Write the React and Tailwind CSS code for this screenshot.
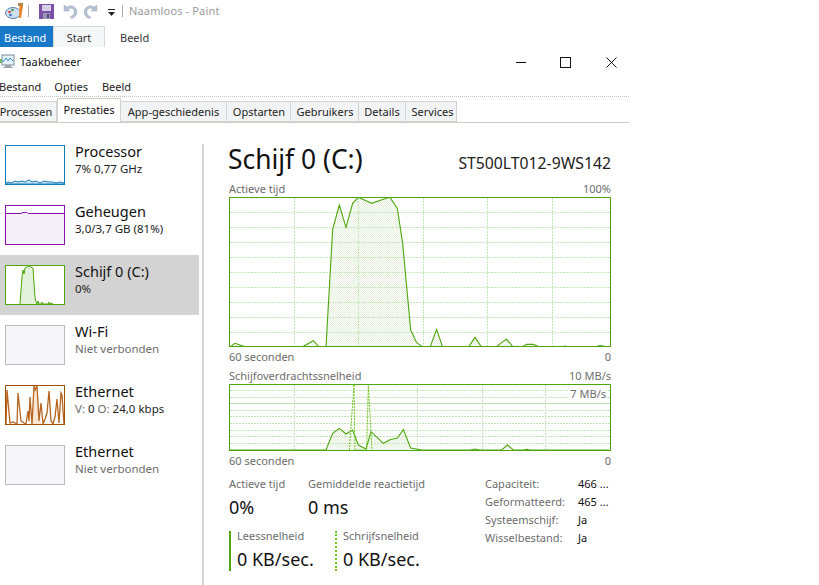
import React from "react";

const z1 = (pts, ox, oy) => pts.map(([x, y]) => `${x / 3 + 220 - ox},${y / 3 + oy}`).join(" ");

const readA = [[28,502],[45,490],[80,502],[245,502],[280,482],[298,502],[318,502],[338,148],[358,75],[378,142],[398,70],[415,52],[455,70],[490,58],[510,52],[532,85],[548,190],[572,450],[590,488],[610,502],[630,502],[650,448],[668,502],[745,502],[765,472],[785,502],[828,502],[845,487],[860,478],[880,502],[905,502],[920,493],[940,493],[960,502],[1020,502],[1035,498],[1050,502],[1120,502],[1140,497],[1170,502]];
const readB = [[28,258],[318,258],[338,208],[358,193],[378,210],[398,198],[415,243],[438,255],[453,203],[490,238],[510,227],[532,222],[550,197],[572,252],[605,258],[750,258],[765,255],[780,258],[845,258],[862,243],[880,258],[910,258],[920,256],[930,258],[1168,258]];
const writeB = [[388,258],[402,62],[405,258],[440,258],[445,62],[456,258]];

function Dither({ id, color }) {
  return (
    <defs>
      <pattern id={id} width="2" height="2" patternUnits="userSpaceOnUse">
        <rect width="2" height="2" fill="#fcfdfa" />
        <rect width="1" height="1" fill={color} />
        <rect x="1" y="1" width="1" height="1" fill={color} />
      </pattern>
    </defs>
  );
}

function ChartA() {
  const pts = z1(readA, 229, 180 - 197);
  return (
    <svg width="382" height="150" className="block">
      <Dither id="fillA" color="#e6f1df" />
      <rect x="0.5" y="0.5" width="381" height="149" fill="#fff" />
      <polygon points={pts} fill="url(#fillA)" />
      {[15, 30, 45, 60, 75, 90, 105, 120, 135].map((y) => (
        <line key={y} x1="1" x2="381" y1={y + 0.5} y2={y + 0.5} stroke="#c4e6ba" strokeDasharray="2 1" />
      ))}
      {[65, 129, 194, 258, 323].map((x) => (
        <line key={x} x1={x + 0.5} x2={x + 0.5} y1="1" y2="149" stroke="#c4e6ba" strokeDasharray="2 1" />
      ))}
      <polyline points={pts} fill="none" stroke="#4da60c" strokeWidth="1.1" />
      <rect x="0.5" y="0.5" width="381" height="149" fill="none" stroke="#4da60c" />
    </svg>
  );
}

function ChartB() {
  const oy = 365 - 385;
  const pts = z1(readB, 229, oy);
  const w = z1(writeB, 229, oy);
  return (
    <svg width="382" height="67" className="block">
      <Dither id="fillB" color="#e6f1df" />
      <rect x="0.5" y="0.5" width="381" height="66" fill="#fff" />
      <polygon points={pts} fill="url(#fillB)" />
      {[6, 13, 26, 32, 39, 46, 52, 59].map((y) => (
        <line key={y} x1="1" x2="381" y1={y + 0.5} y2={y + 0.5} stroke="#c4e4ba" strokeDasharray="2 1" />
      ))}
      <line x1="1" x2="381" y1="19.5" y2="19.5" stroke="#bfe0b2" />
      {[65, 188, 253, 316].map((x) => (
        <line key={x} x1={x + 0.5} x2={x + 0.5} y1="1" y2="66" stroke="#c4e6ba" strokeDasharray="2 1" />
      ))}
      <polyline points={pts} fill="none" stroke="#4da60c" strokeWidth="1.1" />
      <polyline points={w} fill="none" stroke="#6fc41e" strokeWidth="1" strokeDasharray="2 1" />
      <rect x="0.5" y="0.5" width="381" height="66" fill="none" stroke="#4da60c" />
    </svg>
  );
}

function Thumb({ kind }) {
  const common = "block";
  if (kind === "cpu") {
    const n = "1,38 3,37 6,38 10,36 13,37 17,36 20,37 24,35 27,37 31,36 35,38 39,36 43,37 47,37 51,38 55,37 59,38 59,39 1,39";
    return (
      <svg width="60" height="40" className={common}>
        <rect x="0.5" y="0.5" width="59" height="39" fill="#fff" stroke="#117dbb" />
        <polygon points={n} fill="#d3e8f5" stroke="#117dbb" strokeWidth="1" />
      </svg>
    );
  }
  if (kind === "mem") {
    return (
      <svg width="60" height="40" className={common}>
        <rect x="0.5" y="0.5" width="59" height="39" fill="#f4f0f8" stroke="#8b12ae" />
        <rect x="1" y="1" width="58" height="7" fill="#fff" />
        <polyline points="1,8.5 16,8.5 18,7.5 22,7.5 23,8.5 59,8.5" fill="none" stroke="#8b12ae" />
      </svg>
    );
  }
  if (kind === "disk") {
    const p = "15,39 17,12 18,5 19,9 20,3 24,1 26,2 27,3 28,3 29,18 30,32 31,37 32,39 32,39 33,36 34,39 36,39 37,37 38,39 43,39 44,37 45,39 46,38 48,39";
    return (
      <svg width="60" height="40" className={common}>
        <rect x="0.5" y="0.5" width="59" height="39" fill="#fff" stroke="#4da60c" />
        <polygon points={p} fill="#e3f1dc" />
        <polyline points={p} fill="none" stroke="#4da60c" />
      </svg>
    );
  }
  if (kind === "eth") {
    const q = "27,39 29,1 32,1 36,39";
    return (
      <svg width="60" height="40" className={common}>
        <rect x="0" y="0" width="60" height="40" fill="#fff" />
        <polygon points={q} fill="#fbe6d2" />
        <polyline points="1,39 2,5 5,38 8,37 12,39 13,8 16,36 19,38 21,39 22,32 23,26 24,36 25,12 27,39 29,1 30,5 32,1 34,36 36,18 38,39 40,34 42,28 44,6 46,36 48,39 50,32 52,14 54,38 56,8 57,10 59,39" fill="none" stroke="#b6641e" strokeWidth="1.3" />
        <rect x="0.5" y="0.5" width="59" height="39" fill="none" stroke="#a74f01" />
      </svg>
    );
  }
  return (
    <svg width="60" height="40" className={common}>
      <rect x="0.5" y="0.5" width="59" height="39" fill="#f6f5f9" stroke="#bdbdbd" />
    </svg>
  );
}

function SideItem({ kind, title, sub, selected, subClass }) {
  return (
    <div className={`h-[60px] w-[199px] flex items-center pl-[5px] gap-[10px] ${selected ? "bg-[#d3d3d3]" : ""}`}>
      <Thumb kind={kind} />
      <div className="flex flex-col -mt-[14px]">
        <div className="text-[14.5px] leading-[20px] text-[#111]">{title}</div>
        <div className={`text-[11.5px] leading-[15px] ${subClass || "text-[#222]"}`}>{sub}</div>
      </div>
    </div>
  );
}

const Gray = ({ children, className = "" }) => <div className={`text-[11px] text-[#6d6d6d] leading-[14px] ${className}`}>{children}</div>;

function Tab({ children, w, active }) {
  return active ? (
    <div className={`${w} h-[24px] -mt-[3px] -mb-[1px] bg-white border border-[#d0d5cf] border-b-0 flex justify-center pt-[3px] text-[11px] leading-[16px] text-[#111] relative`}>{children}</div>
  ) : (
    <div className={`${w} h-[21px] bg-[#f2f3f5] border-y border-r border-[#d0d5cf] flex justify-center pt-[2px] text-[11px] leading-[16px] text-[#222]`}>{children}</div>
  );
}

function Paint() {
  return (
    <svg width="18" height="18" viewBox="0 0 18 18">
      <ellipse cx="8" cy="11" rx="7.5" ry="5.5" fill="#cfdff0" stroke="#5b86b5" />
      <circle cx="4.5" cy="10" r="1.3" fill="#d9413a" />
      <circle cx="7.5" cy="8" r="1.3" fill="#3f9f4d" />
      <circle cx="5.5" cy="13" r="1.3" fill="#3b74c9" />
      <path d="M16 0 L18 4 L16 16 L14 16 L14.5 4 Z" fill="#e8832b" />
      <rect x="13" y="1" width="5" height="3" fill="#b48a4a" />
    </svg>
  );
}

function Save() {
  return (
    <svg width="15" height="15" viewBox="0 0 15 15">
      <rect x="0" y="0" width="15" height="15" fill="#7b4fa6" />
      <rect x="3" y="1" width="9" height="6" fill="#d6cfe6" />
      <rect x="4" y="9" width="7" height="6" fill="#9c93b3" />
      <rect x="8" y="10" width="2" height="4" fill="#54407a" />
    </svg>
  );
}

function Arrow({ flip }) {
  return (
    <svg width="14" height="15" viewBox="0 0 14 15" style={flip ? { transform: "scaleX(-1)" } : undefined}>
      <path d="M1 1 L1 7 L7 7 L5 5 C8 3 12 5 11 9 C10.5 11 9 12 7 13 L9 14.5 C12 13.5 14 11 14 8 C14 3 8 0 4 3 Z" fill="#b4c0d4" stroke="#a5b1c5" strokeWidth="0.5" />
    </svg>
  );
}

function TaskIcon() {
  return (
    <svg width="16" height="16" viewBox="0 0 16 16">
      <rect x="0" y="5" width="3" height="4" fill="#6cc04a" />
      <rect x="3" y="1" width="12" height="10" fill="#e8f4fb" stroke="#7a8a96" />
      <polyline points="4,8 7,4 9,7 11,4 14,7" fill="none" stroke="#2f8fd0" />
      <rect x="6" y="11" width="6" height="2" fill="#9aa4ac" />
      <rect x="4" y="13" width="10" height="1" fill="#9aa4ac" />
    </svg>
  );
}

export default function App() {
  return (
    <div className="w-[819px] h-[585px] overflow-hidden bg-white flex flex-col" style={{ fontFamily: '"Noto Sans", "Open Sans", sans-serif' }}>
      {/* Paint quick access */}
      <div className="h-[22px] flex items-center shrink-0">
        <div className="ml-[5px] w-[18px]"><Paint /></div>
        <div className="ml-[5px] w-px h-[12px] bg-[#a7b0a8]" />
        <div className="ml-[10px] flex"><Save /></div>
        <div className="ml-[9px] flex"><Arrow /></div>
        <div className="ml-[7px] flex"><Arrow flip /></div>
        <svg width="9" height="8" viewBox="0 0 9 8" className="ml-[9px] mt-[4px]">
          <rect x="1" y="0" width="7" height="1" fill="#222" />
          <path d="M1 3 H8 L4.5 7 Z" fill="#222" />
        </svg>
        <div className="ml-[6px] w-px h-[12px] bg-[#a7b0a8]" />
        <div className="ml-[6px] text-[11px] tracking-[0.15px] text-[#9a9a9a]">Naamloos - Paint</div>
      </div>
      {/* Paint ribbon tabs */}
      <div className="mt-[4px] h-[21px] flex shrink-0 text-[11px]">
        <div className="w-[53px] bg-[#1979c9] text-white flex items-center pl-[4px] pt-[3px]">Bestand</div>
        <div className="w-[52px] bg-[#f5f6f7] border border-b-0 border-[#d6dbd6] text-[#333] flex items-center justify-center pt-[3px]">Start</div>
        <div className="ml-[15px] text-[#333] flex items-center pt-[3px]">Beeld</div>
      </div>
      {/* Task manager title */}
      <div className="mt-[4px] h-[22px] flex items-center shrink-0 relative">
        <div className="flex -ml-[1px]"><TaskIcon /></div>
        <div className="ml-[5px] text-[11px] tracking-[0.1px] text-[#111]">Taakbeheer</div>
        <div className="ml-auto flex items-center w-[313px]">
          <div className="w-[10px] h-px bg-[#111] ml-[10px]" />
          <div className="w-[11px] h-[11px] border border-[#111] ml-[34px]" />
          <svg width="11" height="11" viewBox="0 0 11 11" className="ml-[35px]">
            <path d="M0.5 0.5 L10.5 10.5 M10.5 0.5 L0.5 10.5" stroke="#111" fill="none" />
          </svg>
        </div>
      </div>
      {/* Menu */}
      <div className="h-[18px] mt-[4px] pt-[2px] flex items-center shrink-0 text-[11px] text-[#222] -ml-[1px]">
        <div>Bestand</div>
        <div className="ml-[13px]">Opties</div>
        <div className="ml-[14px]">Beeld</div>
      </div>
      <div className="w-[629px] h-px mt-[1px] border-t border-dotted border-[#c2c4c2] shrink-0" />
      {/* Tabs */}
      <div className="mt-[4px] w-[629px] h-[21px] flex border-b border-[#c9cec8] shrink-0 box-content">
        <Tab w="w-[57px] pr-[4px]">Processen</Tab>
        <Tab w="w-[64px]" active>Prestaties</Tab>
        <Tab w="w-[106px]">App-geschiedenis</Tab>
        <Tab w="w-[64px] pl-[1px]">Opstarten</Tab>
        <Tab w="w-[68px] pl-[1px]">Gebruikers</Tab>
        <Tab w="w-[47px]">Details</Tab>
        <Tab w="w-[51px] pl-[3px]">Services</Tab>
      </div>
      {/* Body */}
      <div className="flex flex-1 min-h-0">
        <div className="w-[202px] pt-[12px] shrink-0">
          <SideItem kind="cpu" title="Processor" sub="7% 0,77 GHz" />
          <SideItem kind="mem" title="Geheugen" sub="3,0/3,7 GB (81%)" />
          <SideItem kind="disk" title="Schijf 0 (C:)" sub="0%" selected />
          <SideItem kind="none" title="Wi-Fi" sub="Niet verbonden" subClass="text-[#6d6d6d]" />
          <SideItem kind="eth" title="Ethernet" sub={<><span className="text-[#6d6d6d]">V:</span> 0 <span className="text-[#6d6d6d]">O:</span> 24,0 kbps</>} />
          <SideItem kind="none" title="Ethernet" sub="Niet verbonden" subClass="text-[#6d6d6d]" />
        </div>
        <div className="w-[2px] bg-[#d4d7d6] mt-[21px] shrink-0" />
        <div className="ml-[25px] w-[382px] flex flex-col">
          <div className="flex items-end justify-between h-[40px] mt-[15px] -ml-[1px]">
            <div className="text-[26.4px] leading-[36px] text-[#111] mb-[1px]">Schijf 0 (C:)</div>
            <div className="text-[15.75px] leading-[22px] text-[#222] mb-[4px]">ST500LT012-9WS142</div>
          </div>
          <div className="flex justify-between h-[14px] mt-[4px]"><Gray>Actieve tijd</Gray><Gray>100%</Gray></div>
          <div className="mt-[1px]"><ChartA /></div>
          <div className="flex justify-between h-[14px] mt-[3px]"><Gray>60 seconden</Gray><Gray>0</Gray></div>
          <div className="flex justify-between h-[14px] mt-[5px]"><Gray>Schijfoverdrachtssnelheid</Gray><Gray>10 MB/s</Gray></div>
          <div className="mt-[1px] relative">
            <ChartB />
            <div className="absolute right-[5px] top-[3px] text-[11px] leading-[14px] text-[#6d6d6d] bg-white">7 MB/s</div>
          </div>
          <div className="flex justify-between h-[14px] mt-[3px]"><Gray>60 seconden</Gray><Gray>0</Gray></div>
          <div className="flex mt-[9px]">
            <div className="w-[256px] shrink-0">
              <div className="flex">
                <div className="w-[79px]">
                  <Gray>Actieve tijd</Gray>
                  <div className="text-[18px] leading-[24px] mt-[4px] text-[#111]">0%</div>
                </div>
                <div>
                  <Gray>Gemiddelde reactietijd</Gray>
                  <div className="text-[18px] leading-[24px] mt-[4px] text-[#111]">0 ms</div>
                </div>
              </div>
              <div className="flex mt-[12px]">
                <div className="w-[106px] h-[40px] border-l-2 border-[#4da60c] pl-[6px]">
                  <Gray className="-mt-[2px]">Leessnelheid</Gray>
                  <div className="text-[18px] leading-[24px] mt-[4px] text-[#111]">0 KB/sec.</div>
                </div>
                <div className="h-[40px] border-l-2 border-dotted border-[#6fc41e] pl-[6px]">
                  <Gray className="-mt-[2px]">Schrijfsnelheid</Gray>
                  <div className="text-[18px] leading-[24px] mt-[4px] text-[#111]">0 KB/sec.</div>
                </div>
              </div>
            </div>
            <div className="grid grid-cols-[93px_1fr] auto-rows-[18px] text-[11px] leading-[18px] -mt-[2px]">
              <div className="text-[#6d6d6d]">Capaciteit:</div><div className="text-[#111]">466 ...</div>
              <div className="text-[#6d6d6d]">Geformatteerd:</div><div className="text-[#111]">465 ...</div>
              <div className="text-[#6d6d6d]">Systeemschijf:</div><div className="text-[#111]">Ja</div>
              <div className="text-[#6d6d6d]">Wisselbestand:</div><div className="text-[#111]">Ja</div>
            </div>
          </div>
        </div>
      </div>
    </div>
  );
}
